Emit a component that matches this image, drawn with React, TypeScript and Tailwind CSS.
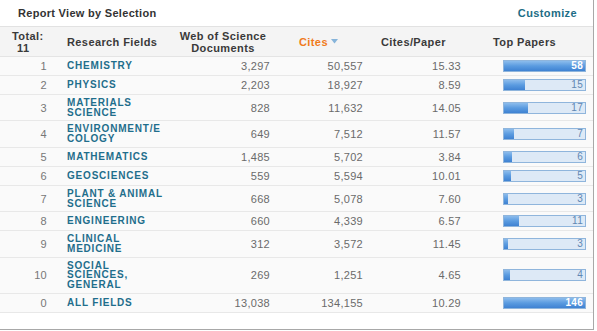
import React from "react";

type Row = { rank: number; name: string[]; docs: string; cites: string; cpp: string; top: number };

const rows: Row[] = [
  { rank: 1, name: ["CHEMISTRY"], docs: "3,297", cites: "50,557", cpp: "15.33", top: 58 },
  { rank: 2, name: ["PHYSICS"], docs: "2,203", cites: "18,927", cpp: "8.59", top: 15 },
  { rank: 3, name: ["MATERIALS", "SCIENCE"], docs: "828", cites: "11,632", cpp: "14.05", top: 17 },
  { rank: 4, name: ["ENVIRONMENT/E", "COLOGY"], docs: "649", cites: "7,512", cpp: "11.57", top: 7 },
  { rank: 5, name: ["MATHEMATICS"], docs: "1,485", cites: "5,702", cpp: "3.84", top: 6 },
  { rank: 6, name: ["GEOSCIENCES"], docs: "559", cites: "5,594", cpp: "10.01", top: 5 },
  { rank: 7, name: ["PLANT & ANIMAL", "SCIENCE"], docs: "668", cites: "5,078", cpp: "7.60", top: 3 },
  { rank: 8, name: ["ENGINEERING"], docs: "660", cites: "4,339", cpp: "6.57", top: 11 },
  { rank: 9, name: ["CLINICAL", "MEDICINE"], docs: "312", cites: "3,572", cpp: "11.45", top: 3 },
  { rank: 10, name: ["SOCIAL", "SCIENCES,", "GENERAL"], docs: "269", cites: "1,251", cpp: "4.65", top: 4 },
  { rank: 0, name: ["ALL FIELDS"], docs: "13,038", cites: "134,155", cpp: "10.29", top: 146 },
];

function Bar({ value, max }: { value: number; max: number }) {
  const inner = 81;
  const w = Math.min(inner, Math.round((value / max) * inner));
  const full = w >= inner - 6;
  return (
    <div className="relative w-[83px] h-[12px] border border-[#8fb5dc] bg-[#dde9f6]">
      <div
        className="absolute left-0 top-0 h-full bg-gradient-to-b from-[#8cbcec] via-[#5a9be0] to-[#3f82d2]"
        style={{ width: w }}
      />
      <span
        className={`absolute right-[2px] top-0 text-[10px] leading-[10px] ${full ? "text-white font-bold" : "text-[#6187b3]"}`}
      >
        {value}
      </span>
    </div>
  );
}

export default function App() {
  return (
    <div
      className="w-[594px] h-[330px] bg-white border-r border-b border-[#a8a8a8] flex flex-col"
      style={{ fontFamily: '"Liberation Sans", Arial, sans-serif' }}
    >
      <div className="h-[27px] shrink-0 flex items-center justify-between border-b border-[#e2e2e2] pl-[18px] pr-[16px]">
        <span className="text-[11px] font-bold text-[#333] tracking-[0.3px]">Report View by Selection</span>
        <span className="text-[11px] font-bold text-[#1d6d85] tracking-[0.4px]">Customize</span>
      </div>
      <div className="h-[30px] shrink-0 flex items-center bg-[#f4f4f4] border-b border-[#e4e4e4] text-[11px] font-bold text-[#3a3a3a] tracking-[0.4px] leading-[12px]">
        <div className="w-[52px] pl-[12px] flex flex-col">
          <span>Total:</span>
          <span className="pl-[5px]">11</span>
        </div>
        <div className="w-[115px] pl-[15px]">Research Fields</div>
        <div className="w-[108px] flex flex-col items-center pl-[4px]">
          <span>Web of Science</span>
          <span>Documents</span>
        </div>
        <div className="w-[93px] pl-[24px] flex items-center gap-[3px] text-[#f07b1c]">
          <span>Cites</span>
          <svg width="7" height="5" viewBox="0 0 7 5">
            <path d="M0 0 L7 0 L3.5 4.5 Z" fill="#86b4da" />
          </svg>
        </div>
        <div className="w-[98px] pl-[13px]">Cites/Paper</div>
        <div className="flex-1 pl-[27px]">Top Papers</div>
      </div>
      <div className="flex flex-col">
        {rows.map((r) => (
          <div
            key={r.rank}
            className="flex items-center py-[3px] bg-[#fafafa] border-b border-[#e8e8e8] text-[11px] leading-[12px] text-[#6a6a6a] tracking-[0.3px]"
          >
            <div className="w-[52px] text-right pr-[5px] text-[#777]">{r.rank}</div>
            <div className="w-[115px] pl-[15px] flex flex-col text-[10px] leading-[9.7px] font-bold text-[#1f6e8c] tracking-[0.8px]">
              {r.name.map((n) => (
                <span key={n}>{n}</span>
              ))}
            </div>
            <div className="w-[108px] text-right pr-[5px]">{r.docs}</div>
            <div className="w-[93px] text-right pr-[5px]">{r.cites}</div>
            <div className="w-[98px] text-right pr-[5px]">{r.cpp}</div>
            <div className="flex-1 pl-[37px] flex items-center">
              <Bar value={r.top} max={r.rank === 0 ? 146 : 58} />
            </div>
          </div>
        ))}
      </div>
      <div className="flex-1 bg-white" />
    </div>
  );
}
